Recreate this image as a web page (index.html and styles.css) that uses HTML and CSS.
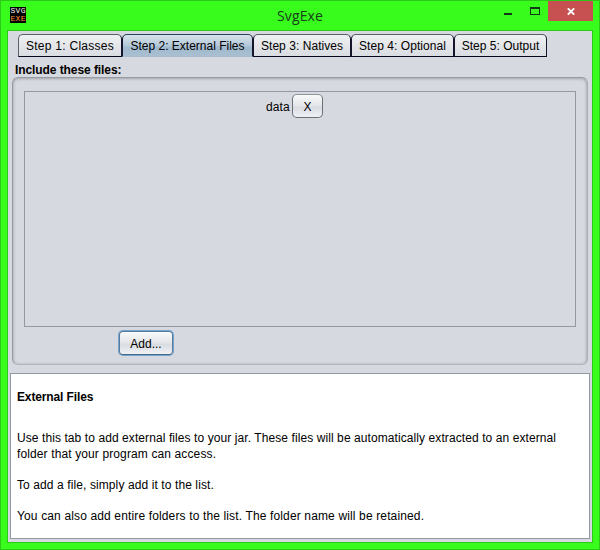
FILE: index.html
```html
<!DOCTYPE html>
<html lang="en">
<head>
<meta charset="utf-8">
<title>SvgExe</title>
<link rel="stylesheet" href="styles.css">
</head>
<body>
<div class="window">
  <header class="titlebar">
    <div class="app-icon"><span>SVG</span><span class="exe">EXE</span></div>
    <h1 class="title">SvgExe</h1>
    <div class="controls">
      <svg class="min" width="8" height="2"><rect width="8" height="2" fill="#16361b"/></svg>
      <svg class="max" width="10" height="8"><path d="M0 0H10V8H0ZM1 2V7H9V2Z" fill="#16361b" fill-rule="evenodd"/></svg>
      <div class="close"><svg width="8" height="7" viewBox="0 0 8 7"><path d="M0.8 0.3L7.2 6.7M7.2 0.3L0.8 6.7" stroke="#fff" stroke-width="1.8"/></svg></div>
    </div>
  </header>
  <main class="content">
    <nav class="tabs">
      <div class="tab t1"><span>Step 1: Classes</span></div>
      <div class="tab t2 active"><span>Step 2: External Files</span></div>
      <div class="tab t3"><span>Step 3: Natives</span></div>
      <div class="tab t4"><span>Step 4: Optional</span></div>
      <div class="tab t5"><span>Step 5: Output</span></div>
    </nav>
    <h2 class="group-title"><span>Include these files:</span></h2>
    <section class="group">
      <div class="list"><span class="file">data</span><button class="btn remove">X</button></div>
      <button class="btn add"><span>Add...</span></button>
    </section>
    <section class="help">
      <h3><span>External Files</span></h3>
      <p><span class="l1">Use this tab to add external files to your jar. These files will be automatically extracted to an external</span><br><span class="l2">folder that your program can access.</span></p>
      <p><span class="l3">To add a file, simply add it to the list.</span></p>
      <p><span class="l4">You can also add entire folders to the list. The folder name will be retained.</span></p>
    </section>
  </main>
</div>
</body>
</html>
```
FILE: styles.css
```css
* { box-sizing: border-box; }
body { margin: 0; font: 12px/16px "Liberation Sans", Arial, sans-serif; color: #000; }
h1, h2, h3, p { margin: 0; font-size: 12px; }
span { white-space: nowrap; }
.window {
  width: 600px; height: 550px; padding: 0 6px 6px;
  background: #38fc1c; border: 1px solid #2dc918;
}
.titlebar { height: 29px; display: flex; }
.app-icon {
  width: 16px; height: 16px; margin: 6px 0 0 3px; background: #000; color: #f4f4f4;
  font: 8px/8px "Liberation Mono", monospace; letter-spacing: 0.4px;
  display: flex; flex-direction: column; overflow: hidden; padding-left: 0.4px;
}
.app-icon .exe { color: #ff9038; }
.title {
  flex: 1; text-align: center; padding: 6px 0 0 70px;
  font: 14px/18px "Open Sans", sans-serif; color: #16401b; letter-spacing: 0.1px;
}
.controls { display: flex; align-items: flex-start; }
.min { margin: 12px 18px 0 0; }
.max { margin: 6px 8px 0 0; }
.close { width: 45px; height: 20px; background: #c75050; display: flex; align-items: center; justify-content: center; }
.close svg { margin-top: 1px; }
.content {
  height: 513px; border: 1px solid #2dc918; background: #d6d9df;
  padding: 3px 2px 2px; display: flex; flex-direction: column;
}
.tabs { display: flex; height: 23px; padding-left: 8px; }
.tab {
  height: 23px; border: 1px solid; border-color: #5c6068 #15152b #08081c #5c6068;
  border-radius: 5px 5px 0 0; text-align: center; line-height: 22px;
  background: linear-gradient(#f0f1f3, #e4e6e9 50%, #d9dce1);
}
.tab.active { background: linear-gradient(#d8e4ec, #b4c8d8 50%, #9fb9ce 60%, #aabfd1); border-color: #28445c #15152b #a9bccd #28445c; }
.tab + .tab { border-left-color: #15152b; }
.t1 { width: 104px; letter-spacing: 0.27px; }
.t2 { width: 131px; }
.t3 { width: 98px; letter-spacing: 0.05px; }
.t4 { width: 103px; letter-spacing: 0.05px; }
.t5 { width: 93px; letter-spacing: 0.02px; }
.group-title { padding: 5px 0 0 5px; height: 20px; font-weight: bold; letter-spacing: -0.08px; }
.group {
  height: 288px; margin: 0 2px; padding: 13px 11px 0; border: 1px solid #989ba1;
  border-bottom-color: #b2b5bb; border-right-color: #aaadb3; border-radius: 6px;
  box-shadow: inset 0 1px 3px #a6a9af, inset -1px 0 2px #bec1c7, inset 1px 0 2px #c6c9cf;
}
.list { height: 236px; border: 1px solid #9297a1; padding: 2px 0 0 241px; display: flex; align-items: flex-start; }
.file { width: 26px; line-height: 26px; letter-spacing: 0.1px; }
.btn {
  font: inherit; color: #000; padding: 1px 0 0; border: 1px solid #6b6f76; border-top-color: #909399;
  border-radius: 5px; background: linear-gradient(#fafafb, #e3e5e8 50%, #d8dbe0 55%, #eff1f5);
}
.remove { width: 31px; height: 24px; }
.add { display: block; width: 54px; height: 24px; margin: 4px 0 0 95px; border-color: #5b7b9a #5b7b9a #4d6880; box-shadow: 0 0 0 1px #73a4d1; border-radius: 4px; }
.help {
  height: 166px; margin-top: 8px; padding: 15px 6px 0; background: #fff;
  border: 1px solid #9297a1; display: flex; flex-direction: column; gap: 15px;
}
.help h3 { margin-bottom: 10px; letter-spacing: -0.13px; }
.l1 { letter-spacing: 0.085px; }
.l2 { letter-spacing: 0.12px; }
.l3 { letter-spacing: 0.1px; }
.l4 { letter-spacing: 0.14px; }
```
